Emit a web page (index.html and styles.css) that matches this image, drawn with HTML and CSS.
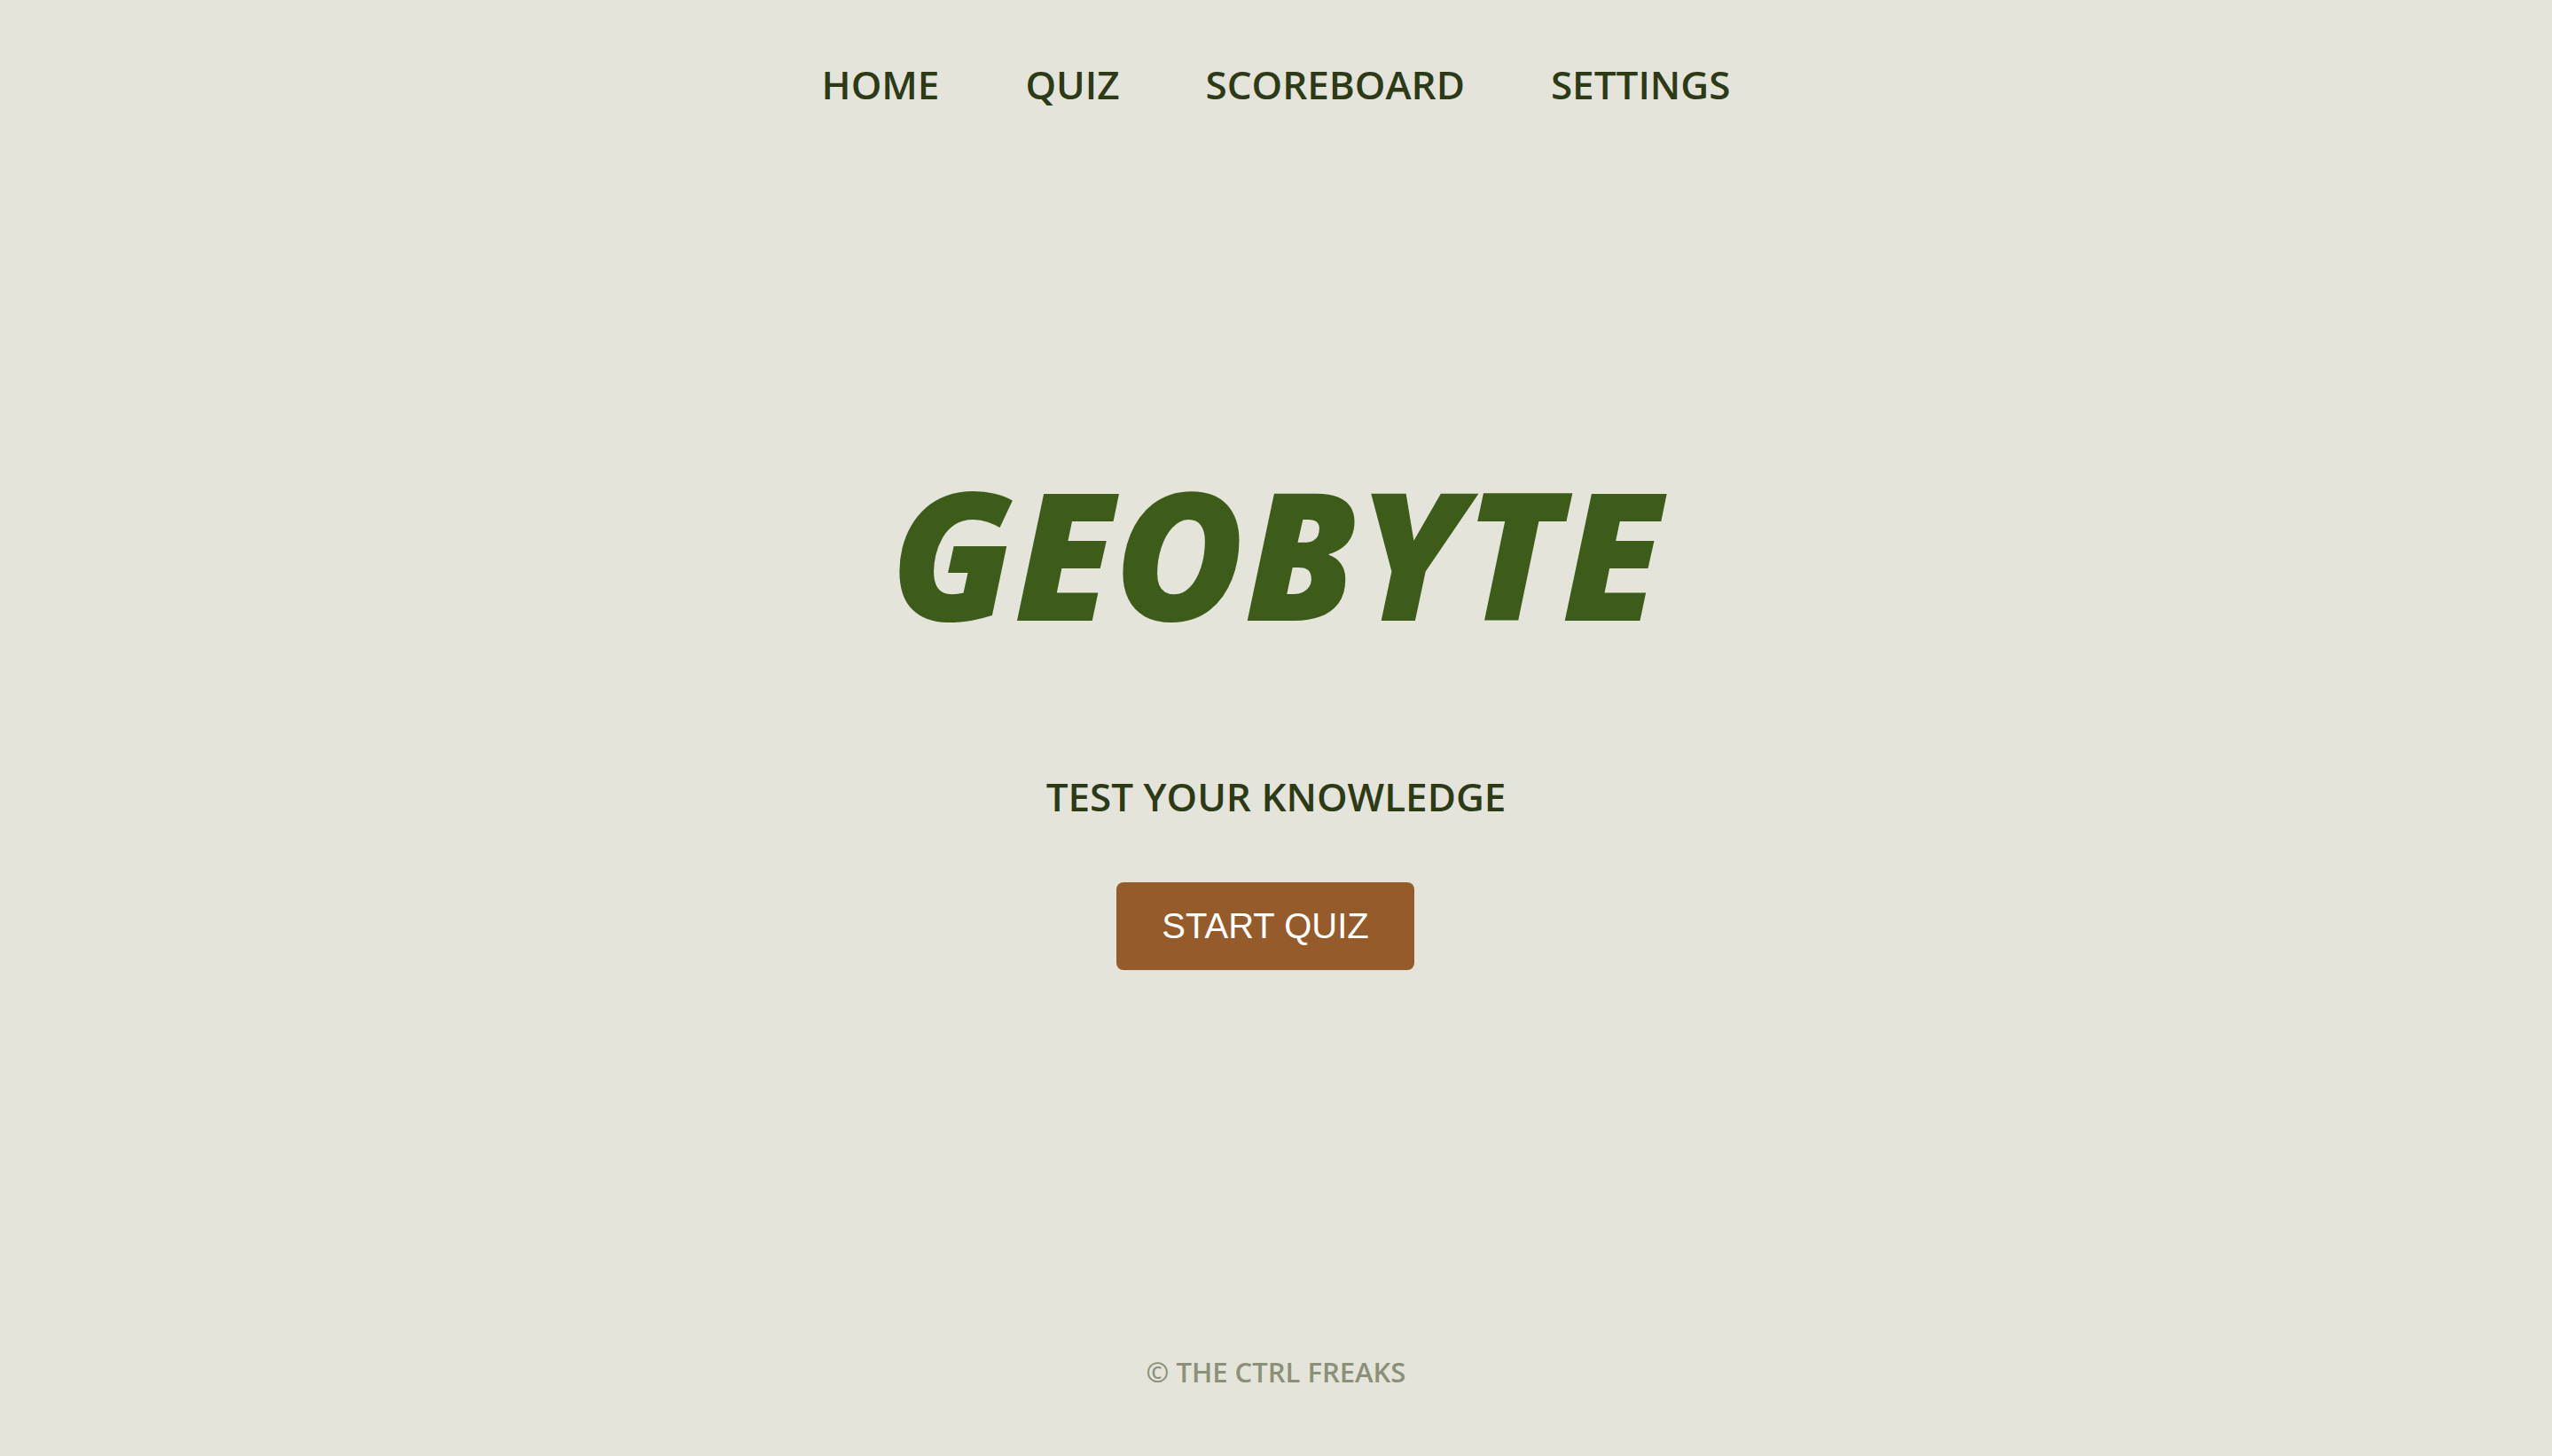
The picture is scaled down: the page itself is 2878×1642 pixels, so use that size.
FILE: index.html
```html
<!DOCTYPE html>
<html lang="en">
<head>
<meta charset="utf-8">
<title>GeoByte</title>
<link rel="stylesheet" href="styles.css">
</head>
<body>
<header class="site-header">
  <nav class="nav">
    <a class="nav-link" href="#">HOME</a>
    <a class="nav-link" href="#">QUIZ</a>
    <a class="nav-link" href="#">SCOREBOARD</a>
    <a class="nav-link" href="#">SETTINGS</a>
  </nav>
</header>
<main class="hero">
  <h1 class="title">GEOBYTE</h1>
  <p class="subtitle">TEST YOUR KNOWLEDGE</p>
  <button class="start-btn" type="button">START QUIZ</button>
</main>
<footer class="site-footer">© THE CTRL FREAKS</footer>
</body>
</html>
```
FILE: styles.css
```css
html, body {
  margin: 0;
  padding: 0;
}
body {
  background: #e4e4db;
  font-family: "Open Sans", "Liberation Sans", sans-serif;
  min-height: 100vh;
  display: flex;
  flex-direction: column;
}
.site-header {
  padding-top: 73px;
}
.nav {
  display: flex;
  justify-content: center;
  gap: 97px;
}
.nav-link {
  font-size: 44px;
  line-height: 1;
  font-weight: 600;
  color: #2c3a16;
  text-decoration: none;
}
.hero {
  display: flex;
  flex-direction: column;
  align-items: center;
  padding-top: 406px;
}
.title {
  margin: 0;
  font-size: 200px;
  line-height: 1;
  font-weight: 800;
  font-style: italic;
  color: #3d5b19;
}
.subtitle {
  margin: 153px 0 0;
  font-size: 44px;
  line-height: 1;
  font-weight: 600;
  color: #2c3a16;
}
.start-btn {
  margin: 75px 24px 0 0;
  width: 336px;
  height: 99px;
  border: none;
  border-radius: 8px;
  background: #965b2a;
  color: #ffffff;
  font-family: "Liberation Sans", Arial, sans-serif;
  font-size: 40px;
  cursor: pointer;
}
.site-footer {
  margin-top: auto;
  padding-bottom: 79px;
  text-align: center;
  font-size: 31px;
  line-height: 1;
  font-weight: 600;
  color: #8b9078;
}
```
